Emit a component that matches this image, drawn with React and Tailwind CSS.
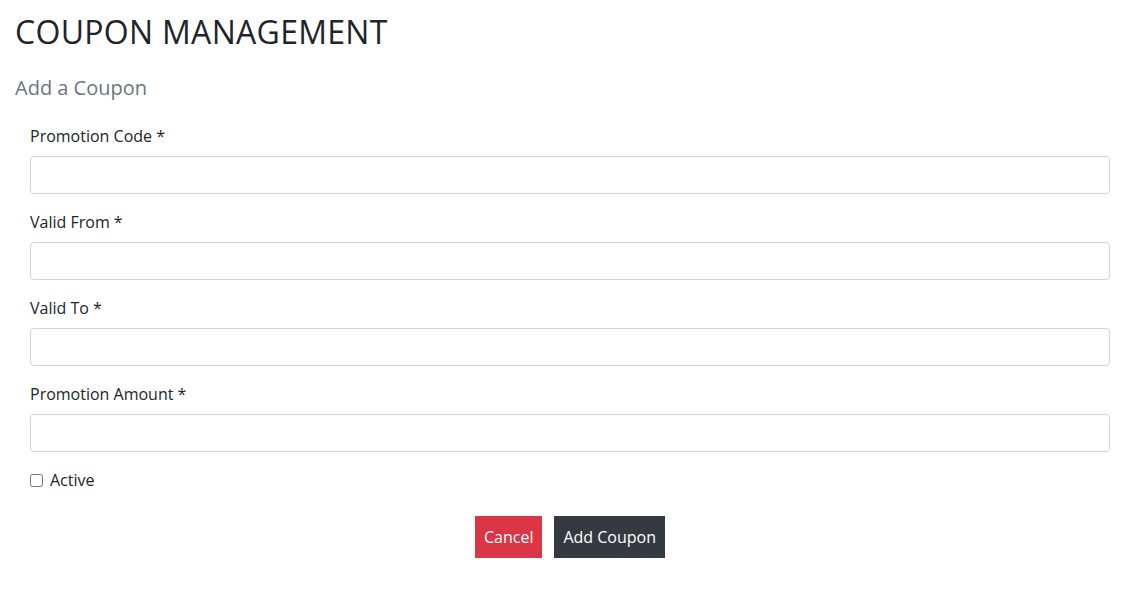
export default function App() {
  const fields = ["Promotion Code *", "Valid From *", "Valid To *", "Promotion Amount *"];
  return (
    <div className="min-h-screen bg-white text-[#212529]" style={{ fontFamily: '"Open Sans", sans-serif' }}>
      <div className="pl-[15px] pr-[21px] pt-[13px]">
        <h1 className="text-[32px] leading-[1.2] font-medium tracking-[0.3px]">COUPON MANAGEMENT</h1>
        <h2 className="mt-[25px] text-[20px] leading-[1.2] text-[#6c757d] font-medium">Add a Coupon</h2>
        <form className="mt-[24px] pl-[15px]" onSubmit={(e) => e.preventDefault()}>
          {fields.map((f) => (
            <div key={f} className="mb-4">
              <label className="block text-[16px] leading-6 mb-2">{f}</label>
              <input type="text" className="block w-full h-[38px] rounded border border-[#ced4da] bg-white px-3 outline-none" />
            </div>
          ))}
          <div className="flex items-center gap-[7px] text-[16px] leading-6">
            <input type="checkbox" className="w-[13px] h-[13px] m-0" />
            <span>Active</span>
          </div>
          <div className="mt-[24px] flex justify-center gap-3">
            <button type="button" className="bg-[#dc3545] text-white text-[16px] leading-6 px-[9px] py-[9px]">Cancel</button>
            <button type="submit" className="bg-[#343a40] text-white text-[16px] leading-6 px-[9px] py-[9px]">Add Coupon</button>
          </div>
        </form>
      </div>
    </div>
  );
}
